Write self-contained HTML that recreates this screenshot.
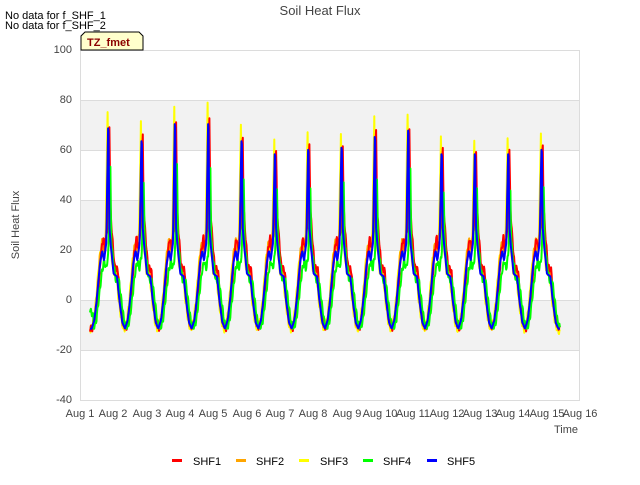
<!DOCTYPE html>
<html><head><meta charset="utf-8"><style>
body{margin:0;background:#fff;width:640px;height:480px;overflow:hidden;font-family:"Liberation Sans",sans-serif;}
</style></head><body>
<svg id="s" width="640" height="480" xmlns="http://www.w3.org/2000/svg" font-family="Liberation Sans, sans-serif">
<rect x="80" y="50" width="500" height="350" fill="#fff"/>
<rect x="80" y="100" width="500" height="50" fill="#f2f2f2"/>
<rect x="80" y="200" width="500" height="50" fill="#f2f2f2"/>
<rect x="80" y="300" width="500" height="50" fill="#f2f2f2"/>
<g stroke="#dcdcdc" stroke-width="1">
<line x1="80" y1="50.5" x2="580" y2="50.5"/><line x1="80" y1="100.5" x2="580" y2="100.5"/>
<line x1="80" y1="150.5" x2="580" y2="150.5"/><line x1="80" y1="200.5" x2="580" y2="200.5"/>
<line x1="80" y1="250.5" x2="580" y2="250.5"/><line x1="80" y1="300.5" x2="580" y2="300.5"/>
<line x1="80" y1="350.5" x2="580" y2="350.5"/><line x1="80" y1="400.5" x2="580" y2="400.5"/>
<line x1="80.5" y1="50" x2="80.5" y2="400"/><line x1="579.5" y1="50" x2="579.5" y2="400"/>
</g>
<g id="lines" fill="none" stroke-width="2" stroke-linejoin="round"></g>
<g font-size="11" fill="#444" text-anchor="end">
<text x="72" y="53">100</text><text x="72" y="103">80</text><text x="72" y="153">60</text>
<text x="72" y="203">40</text><text x="72" y="253">20</text><text x="72" y="303">0</text>
<text x="72" y="353">-20</text><text x="72" y="403">-40</text>
</g>
<g font-size="11" fill="#444" text-anchor="middle">
<text x="80" y="417">Aug 1</text><text x="113" y="417">Aug 2</text><text x="147" y="417">Aug 3</text>
<text x="180" y="417">Aug 4</text><text x="213" y="417">Aug 5</text><text x="247" y="417">Aug 6</text>
<text x="280" y="417">Aug 7</text><text x="313" y="417">Aug 8</text><text x="347" y="417">Aug 9</text>
<text x="380" y="417">Aug 10</text><text x="413" y="417">Aug 11</text><text x="447" y="417">Aug 12</text>
<text x="480" y="417">Aug 13</text><text x="513" y="417">Aug 14</text><text x="547" y="417">Aug 15</text>
<text x="580" y="417">Aug 16</text>
</g>
<text x="566" y="433" font-size="11" fill="#444" text-anchor="middle">Time</text>
<text x="19" y="225" font-size="11" fill="#444" text-anchor="middle" transform="rotate(-90 19 225)">Soil Heat Flux</text>
<text x="320" y="15" font-size="13" fill="#444" text-anchor="middle">Soil Heat Flux</text>
<text x="5" y="19" font-size="11" fill="#000">No data for f_SHF_1</text>
<text x="5" y="29" font-size="11" fill="#000">No data for f_SHF_2</text>
<path d="M81 50 V36 L85 32 H139 L143 36 V50 Z" fill="#ffffcc" stroke="#000" stroke-width="1"/>
<text x="87" y="46" font-size="11" font-weight="bold" fill="#8b0000">TZ_fmet</text>
<g font-size="11" fill="#000">
<rect x="172" y="459" width="10" height="3" fill="#f00"/><text x="193" y="465">SHF1</text>
<rect x="236" y="459" width="10" height="3" fill="#ffa500"/><text x="256" y="465">SHF2</text>
<rect x="299" y="459" width="10" height="3" fill="#ff0"/><text x="320" y="465">SHF3</text>
<rect x="363" y="459" width="10" height="3" fill="#0f0"/><text x="383" y="465">SHF4</text>
<rect x="427" y="459" width="10" height="3" fill="#00f"/><text x="447" y="465">SHF5</text>
</g>
</svg>
<script>
var peaks=[76,70,78,78,70,64,66,67,72,75,64,64,64,66];
var mins=[-16,-17,-16,-14,-20,-22,-22,-18,-22,-17,-20,-22,-22,-19];
var prof=[[-0.5,0],[-0.42,0.05],[-0.35,0.45],[-0.25,0.7],[-0.18,0.95],[-0.13,0.75],[-0.06,1.1],[0,2],[0.03,1.4],[0.08,1.0],[0.16,0.5],[0.26,0.45],[0.33,0.2],[0.42,0.02],[0.5,0]];
// values: shoulder in fraction; 2 = peak marker
function shape(dt,P,base,sh){
 if(dt<=prof[0][0]||dt>=prof[prof.length-1][0]) return null;
 for(var i=0;i<prof.length-1;i++){
  var a=prof[i],b=prof[i+1];
  if(dt>=a[0]&&dt<=b[0]){
   var f=(dt-a[0])/(b[0]-a[0]);
   function val(k){ if(k==2) return P; if(k==0) return base; return k*22*sh; }
   var va=val(a[1]),vb=val(b[1]);
   // map the fraction "0.05"/"0.02" near base
   if(a[1]==0.05) va=-8; if(b[1]==0.05) vb=-8;
   if(a[1]==0.02) va=-9; if(b[1]==0.02) vb=-9;
   if(a[1]==0.45&&i<3) va=0; if(b[1]==0.45&&i<3) vb=0;
   if(a[1]==0.2) va=0; if(b[1]==0.2) vb=0;
   return va+(vb-va)*f;
  }
 }
 return base;
}
var series=[
 {c:"#ffff00",lag:-0.02,pk:1.03,mn:1.0,sh:1.05,base:-12},
 {c:"#ffa500",lag:0.0,pk:0.95,mn:0.85,sh:1.15,base:-11},
 {c:"#ff0000",lag:0.03,pk:0.98,mn:0.8,sh:1.2,base:-11.5},
 {c:"#00ff00",lag:0.06,pk:0.7,mn:0,sh:0.75,base:-11.5},
 {c:"#0000ff",lag:0.0,pk:1.0,mn:0,sh:0.95,base:-11.5}];
var g=document.getElementById("lines");
series.forEach(function(S,si){
 var pts=[];
 for(var t=0.3;t<=14.4;t+=1/72){
  var d=Math.round(t-0.85-S.lag); if(d<0)d=0; if(d>13)d=13;
  var dt=t-(d+0.85+S.lag);
  var v=shape(dt,peaks[d]*S.pk,S.base,S.sh);
  if(v===null){
   // night
   var dd=dt>0?d:d-1; if(dd<0)dd=0;
   var ndt=dt>0?dt-0.5:dt+0.5+1; // progress through night (0..~0.5)
   var pr=dt>0?(dt-0.5)/0.5:(1+dt-0.5)/0.5; pr=Math.max(0,Math.min(1,pr));
   if(S.mn){ v=S.base+(mins[dd]*S.mn-S.base)*pr; if(pr>0.85) v=S.base+(mins[dd]*S.mn-S.base)*(1-pr)/0.15; }
   else v=S.base;
   if(t<0.6&&si==3) v=-4-(t-0.3)*25;
  }
  if(S.mn||si==3) v+=Math.sin(t*97+si*13)*1.2;
  if(v<-11.5&&!S.mn) v=-11.5;
  var x=80+t*500/15, y=300-v*2.5;
  pts.push(x.toFixed(1)+","+y.toFixed(1));
 }
 var p=document.createElementNS("http://www.w3.org/2000/svg","polyline");
 p.setAttribute("points",pts.join(" "));p.setAttribute("stroke",S.c);
 g.appendChild(p);
});
</script>
</body></html>
